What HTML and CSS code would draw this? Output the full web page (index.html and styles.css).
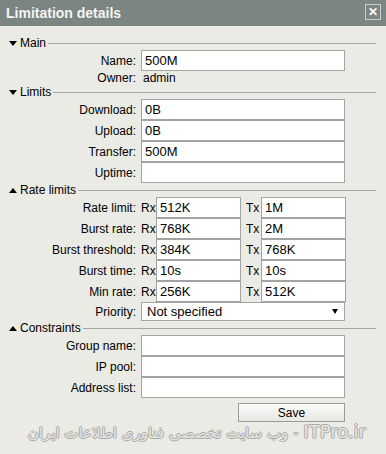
FILE: index.html
```html
<!DOCTYPE html>
<html lang="en">
  <head>
    <meta charset="UTF-8">
    <title>Limitation details</title>
    <link rel="stylesheet" href="styles.css">
  </head>
  <body>
    <div class="titlebar">
      <span class="title">Limitation details</span>
      <span class="close">&#x2715;</span>
    </div>
    <div class="content">
      <div class="section-head"><span class="arrow down"></span><span class="head-text">Main</span><span class="head-line"></span></div>
      <div class="row"><label class="label">Name:</label><input class="field" type="text" value="500M"></div>
      <div class="row short"><span class="label">Owner:</span><span class="value">admin</span></div>

      <div class="section-head"><span class="arrow down"></span><span class="head-text">Limits</span><span class="head-line"></span></div>
      <div class="row"><label class="label">Download:</label><input class="field" type="text" value="0B"></div>
      <div class="row"><label class="label">Upload:</label><input class="field" type="text" value="0B"></div>
      <div class="row"><label class="label">Transfer:</label><input class="field" type="text" value="500M"></div>
      <div class="row"><label class="label">Uptime:</label><input class="field" type="text" value=""></div>

      <div class="section-head"><span class="arrow up"></span><span class="head-text">Rate limits</span><span class="head-line"></span></div>
      <div class="row"><label class="label">Rate limit:</label><span class="dir">Rx</span><input class="half" type="text" value="512K"><span class="dir tx">Tx</span><input class="half" type="text" value="1M"></div>
      <div class="row"><label class="label">Burst rate:</label><span class="dir">Rx</span><input class="half" type="text" value="768K"><span class="dir tx">Tx</span><input class="half" type="text" value="2M"></div>
      <div class="row"><label class="label">Burst threshold:</label><span class="dir">Rx</span><input class="half" type="text" value="384K"><span class="dir tx">Tx</span><input class="half" type="text" value="768K"></div>
      <div class="row"><label class="label">Burst time:</label><span class="dir">Rx</span><input class="half" type="text" value="10s"><span class="dir tx">Tx</span><input class="half" type="text" value="10s"></div>
      <div class="row"><label class="label">Min rate:</label><span class="dir">Rx</span><input class="half" type="text" value="256K"><span class="dir tx">Tx</span><input class="half" type="text" value="512K"></div>
      <div class="row select-row"><label class="label">Priority:</label><div class="select">Not specified<span class="select-arrow"></span></div></div>

      <div class="section-head"><span class="arrow up"></span><span class="head-text">Constraints</span><span class="head-line"></span></div>
      <div class="row"><label class="label">Group name:</label><input class="field" type="text" value=""></div>
      <div class="row"><label class="label">IP pool:</label><input class="field" type="text" value=""></div>
      <div class="row"><label class="label">Address list:</label><input class="field" type="text" value=""></div>

      <div class="actions"><button class="save">Save</button></div>
    </div>
    <div class="watermark" dir="rtl"><span class="site">ITPro.ir</span> - وب سایت تخصصی فناوری اطلاعات ایران</div>
  </body>
</html>
```

FILE: styles.css
```css
body {
  margin: 0;
  background-color: #ebebe5;
  font-family: 'Liberation Sans', Arial, sans-serif;
  font-size: 12px;
  color: #000;
}
.titlebar { height: 26px; background-color: #7b8582; display: flex; align-items: center; justify-content: space-between; padding: 0 5px 0 6px; }
.title { color: #f4f4f4; font-weight: bold; font-size: 14px; }
.close { width: 14px; height: 14px; border: 1px solid #c8cdcb; color: #fff; font-size: 12px; font-weight: bold; line-height: 14px; text-align: center; margin-top: -2px; }
.content { padding: 10px 10px 0 9px; }
.section-head { display: flex; align-items: center; height: 14px; }
.arrow { width: 0; height: 0; border-left: 4px solid transparent; border-right: 4px solid transparent; margin-right: 3px; }
.arrow.down { border-top: 5px solid #000; }
.arrow.up { border-bottom: 5px solid #000; }
.head-text { margin-right: 2px; }
.head-line { flex: 1; border-top: 1px solid #a4a4a0; }
.row { display: flex; align-items: center; height: 21px; }
.row.short { height: 13px; margin-bottom: 1px; }
.label { width: 127px; text-align: right; margin-right: 5px; flex-shrink: 0; }
.value { padding-left: 2px; }
input { font-family: 'Liberation Sans', Arial, sans-serif; font-size: 13px; height: 21px; box-sizing: border-box; border: 1px solid #a3a3a3; background: #fff; padding: 0 3px; margin: 0; outline: none; color: #000; }
.field { width: 204px; }
.half { width: 85px; }
.dir { width: 15px; }
.dir.tx { margin-left: 5px; }
.select-row { height: 19px; }
.select { position: relative; width: 204px; height: 19px; box-sizing: border-box; border: 1px solid #a3a3a3; background: #fff; font-size: 13px; line-height: 17px; padding-left: 5px; }
.select-arrow { position: absolute; right: 6px; top: 6px; width: 0; height: 0; border-left: 3px solid transparent; border-right: 3px solid transparent; border-top: 5px solid #000; }
.actions { display: flex; padding-left: 229px; margin-top: 5px; }
.save { width: 107px; height: 19px; border: 1px solid #9c9c9c; background: linear-gradient(#fbfbfb, #e6e6e2); font-family: 'Liberation Sans', Arial, sans-serif; font-size: 12px; padding: 0; }
.watermark { font-family: 'DejaVu Sans', sans-serif; font-size: 15px; color: #e6e6e2; text-shadow: -1px 0 #a8a8a6, 1px 0 #a8a8a6, 0 -1px #a8a8a6, 0 1px #a8a8a6; padding-right: 20px; white-space: nowrap; line-height: 18px; margin-top: 1px; }
.site { font-size: 18px; }
```
